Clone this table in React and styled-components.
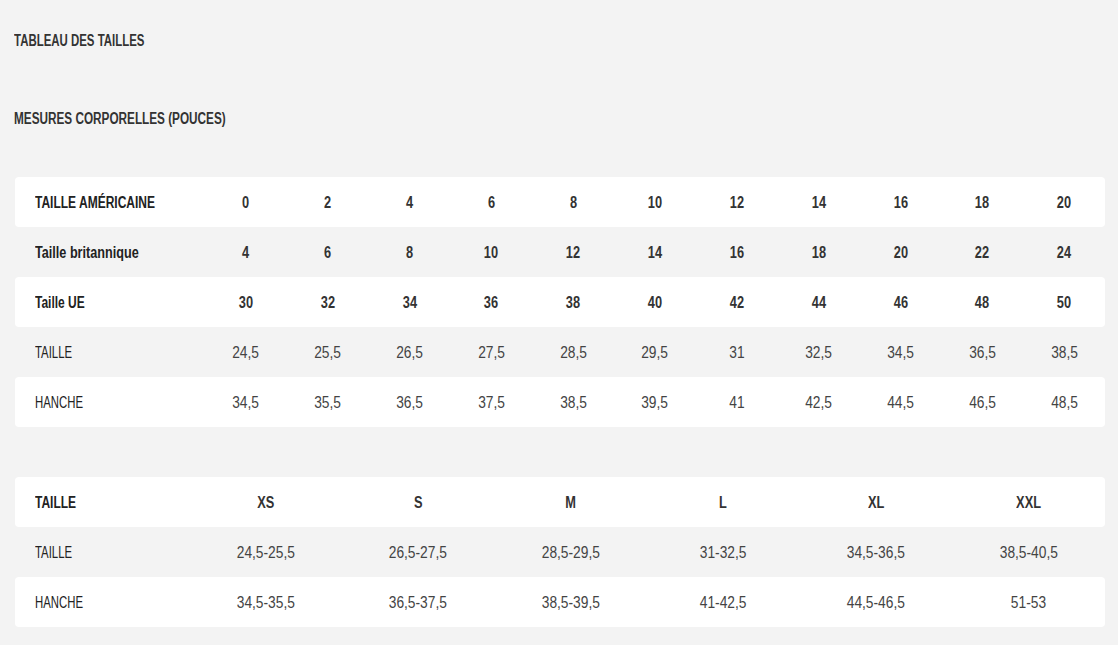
import React from 'react'
import styled, { createGlobalStyle } from 'styled-components'

const Global = createGlobalStyle`
  body {
    margin: 0;
    background: #f3f3f3;
    font-family: "Liberation Sans", Arial, sans-serif;
  }
`

const Page = styled.div`
  padding: 31px 13px 18px 15px;
  display: flex;
  flex-direction: column;
`

// the reference uses a condensed face; squeeze Liberation Sans horizontally
const Narrow = styled.span`
  display: inline-block;
  white-space: nowrap;
  transform: scaleX(${(p) => p.sx});
  transform-origin: ${(p) => (p.center ? 'center' : 'left')} center;
`

const Title = styled.h2`
  margin: 0 0 0 -1px;
  font-size: 16px;
  line-height: 20px;
  font-weight: 700;
  color: #333;
  text-transform: uppercase;
`

const SubTitle = styled(Title)`
  margin-top: 58px;
`

const Table = styled.div`
  display: flex;
  flex-direction: column;
  margin-top: ${(p) => p.top}px;
`

const Row = styled.div`
  display: grid;
  grid-template-columns: ${(p) => p.label}px repeat(${(p) => p.cols}, 1fr);
  box-sizing: border-box;
  height: 50px;
  padding-top: 2px;
  align-items: center;
  border-radius: 4px;
  background: ${(p) => (p.white ? '#fff' : 'transparent')};
`

const Label = styled.div`
  padding-left: 20px;
  font-size: 16px;
  font-weight: ${(p) => (p.bold ? 700 : 400)};
  color: #222;
`

const Cell = styled.div`
  text-align: center;
  font-size: 16px;
  font-weight: ${(p) => (p.bold ? 700 : 400)};
  color: ${(p) => (p.bold ? '#333' : '#444')};
`

const bodyRows = [
  { label: 'TAILLE AMÉRICAINE', bold: true, values: ['0', '2', '4', '6', '8', '10', '12', '14', '16', '18', '20'] },
  { label: 'Taille britannique', bold: true, sx: 0.79, values: ['4', '6', '8', '10', '12', '14', '16', '18', '20', '22', '24'] },
  { label: 'Taille UE', bold: true, values: ['30', '32', '34', '36', '38', '40', '42', '44', '46', '48', '50'] },
  { label: 'TAILLE', values: ['24,5', '25,5', '26,5', '27,5', '28,5', '29,5', '31', '32,5', '34,5', '36,5', '38,5'] },
  { label: 'HANCHE', values: ['34,5', '35,5', '36,5', '37,5', '38,5', '39,5', '41', '42,5', '44,5', '46,5', '48,5'] },
]

const letterRows = [
  { label: 'TAILLE', bold: true, values: ['XS', 'S', 'M', 'L', 'XL', 'XXL'] },
  { label: 'TAILLE', values: ['24,5-25,5', '26,5-27,5', '28,5-29,5', '31-32,5', '34,5-36,5', '38,5-40,5'] },
  { label: 'HANCHE', values: ['34,5-35,5', '36,5-37,5', '38,5-39,5', '41-42,5', '44,5-46,5', '51-53'] },
]

function SizeTable({ rows, label, top }) {
  return (
    <Table top={top}>
      {rows.map((r, i) => (
        <Row key={i} white={i % 2 === 0} label={label} cols={r.values.length}>
          <Label bold={r.bold}>
            <Narrow sx={r.sx || (r.bold ? 0.75 : 0.71)}>{r.label}</Narrow>
          </Label>
          {r.values.map((v, j) => (
            <Cell key={j} bold={r.bold}>
              <Narrow center sx={r.bold ? 0.8 : 0.86}>{v}</Narrow>
            </Cell>
          ))}
        </Row>
      ))}
    </Table>
  )
}

export default function App() {
  return (
    <>
      <Global />
      <Page>
        <Title>
          <Narrow sx={0.715}>Tableau des tailles</Narrow>
        </Title>
        <SubTitle>
          <Narrow sx={0.735}>Mesures corporelles (pouces)</Narrow>
        </SubTitle>
        <SizeTable rows={bodyRows} label={190} top={48} />
        <SizeTable rows={letterRows} label={174} top={50} />
      </Page>
    </>
  )
}
